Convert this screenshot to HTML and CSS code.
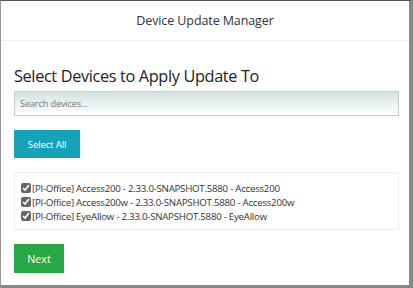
FILE: index.html
```html
<!DOCTYPE html>
<html lang="en">

<head>
    <meta charset="UTF-8">
    <meta name="viewport" content="width=device-width, initial-scale=1">
    <title>Device Update Manager</title>
    <link rel="stylesheet" href="styles.css">
</head>

<body>

    <div class="window">
        <div class="header">Device Update Manager</div>

        <div class="content">
            <h2 class="title">Select Devices to Apply Update To</h2>

            <input class="search" type="text" placeholder="Search devices...">

            <button class="btn btn_info">Select All</button>

            <div class="device_list">
                <label class="device"><input type="checkbox" checked>[PI-Office] Access200 - 2.33.0-SNAPSHOT.5880 - Access200</label>
                <label class="device"><input type="checkbox" checked>[PI-Office] Access200w - 2.33.0-SNAPSHOT.5880 - Access200w</label>
                <label class="device"><input type="checkbox" checked>[PI-Office] EyeAllow - 2.33.0-SNAPSHOT.5880 - EyeAllow</label>
            </div>

            <button class="btn btn_success">Next</button>
        </div>
    </div>

</body>

</html>
```

FILE: styles.css
```css
body {
    margin: 0;
    font-family: 'Open Sans', sans-serif;
    color: #333;
    background: #fff;
}

.window {
    width: 413px;
    height: 288px;
    box-sizing: border-box;
    border-top: 1px solid #555;
    border-left: 1px solid #999;
    border-right: 4px solid #888;
    border-bottom: 3px solid #888;
    overflow: hidden;
}

.header {
    height: 39px;
    border-bottom: 1px solid #eee;
    display: flex;
    justify-content: center;
    align-items: center;
    font-size: 12.5px;
    letter-spacing: -0.1px;
    color: #333;
}

.content {
    padding: 0 10px 0 13px;
    display: flex;
    flex-direction: column;
    align-items: flex-start;
}

.title {
    margin: 23px 0 3px;
    font-size: 16.3px;
    font-weight: 500;
    line-height: 24px;
    letter-spacing: -0.35px;
    color: #222;
}

.search {
    width: 100%;
    height: 25px;
    box-sizing: border-box;
    border: 1px solid #ccc;
    background: linear-gradient(180deg, #d3e2e2, #ffffff);
    padding: 0 5px;
    font-family: inherit;
    font-size: 9.2px;
    letter-spacing: -0.15px;
    color: #555;
    outline: none;
}

.search::placeholder {
    color: #777;
}

.btn {
    border: none;
    color: #fff;
    font-family: inherit;
    cursor: pointer;
    padding: 0;
}

.btn_info {
    margin-top: 14px;
    width: 66px;
    height: 28px;
    background-color: #17a2b8;
    font-size: 9.6px;
    letter-spacing: -0.15px;
}

.btn_success {
    margin-top: 14px;
    width: 50px;
    height: 29px;
    background-color: #28a745;
    font-size: 10.8px;
    font-weight: 500;
    letter-spacing: -0.1px;
}

.device_list {
    margin-top: 14px;
    width: 100%;
    box-sizing: border-box;
    border: 1px solid #eee;
    padding: 8px 6px 6px;
    display: flex;
    flex-direction: column;
}

.device {
    display: flex;
    align-items: center;
    height: 14px;
    font-size: 9.7px;
    letter-spacing: -0.25px;
    color: #333;
}

.device input {
    width: 10px;
    height: 10px;
    margin: 0 1px 0 0;
    accent-color: #666;
}
```
